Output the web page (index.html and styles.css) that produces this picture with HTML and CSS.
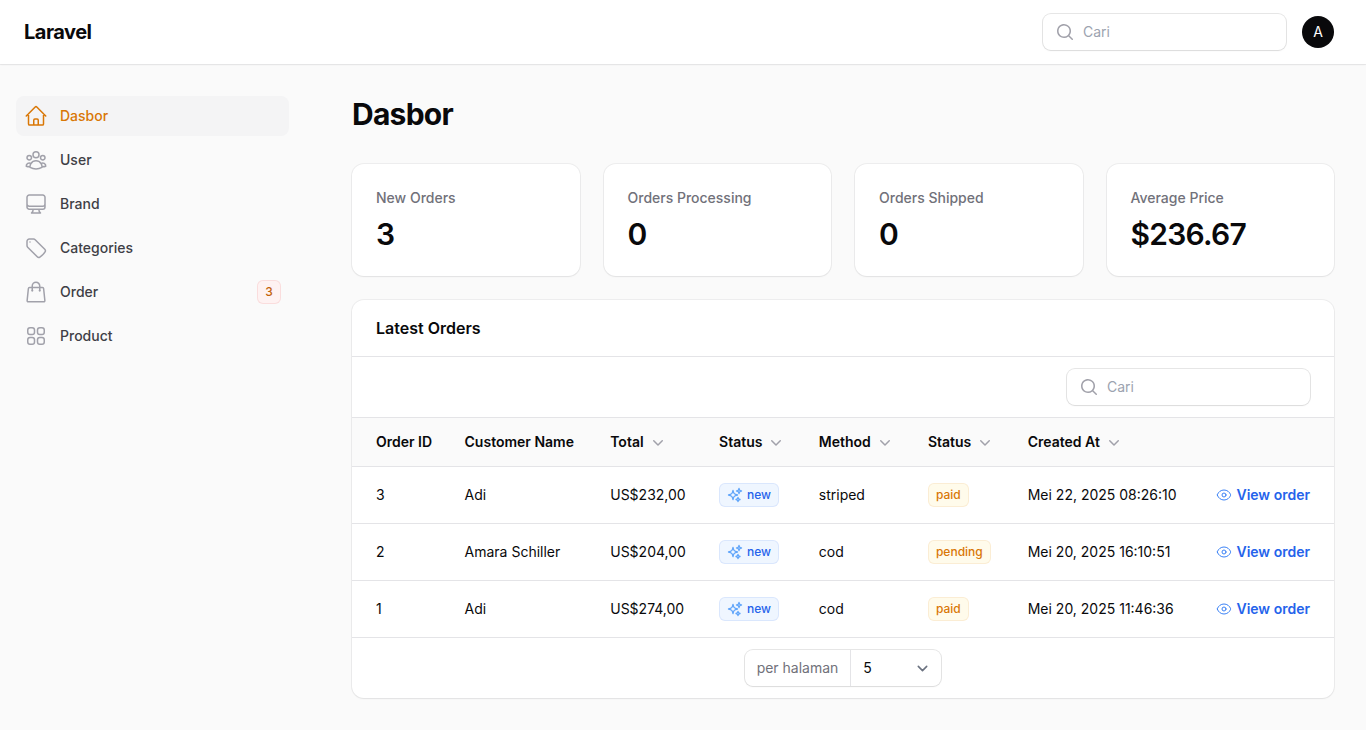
FILE: index.html
```html
<!DOCTYPE html>
<html lang="id">
<head>
    <meta charset="UTF-8">
    <meta name="viewport" content="width=device-width, initial-scale=1.0">
    <title>Dasbor - Laravel</title>
    <link rel="stylesheet" href="styles.css">
</head>
<body>
    <!-- Shared icons -->
    <svg class="sprite" aria-hidden="true">
        <symbol id="search" viewBox="0 0 20 20">
            <path fill="currentColor" fill-rule="evenodd" d="M9 3.5a5.5 5.5 0 1 0 0 11 5.5 5.5 0 0 0 0-11ZM2 9a7 7 0 1 1 12.452 4.391l3.328 3.329a.75.75 0 1 1-1.06 1.06l-3.329-3.328A7 7 0 0 1 2 9Z" clip-rule="evenodd"/>
        </symbol>
        <symbol id="chevron" viewBox="0 0 20 20">
            <path fill="currentColor" fill-rule="evenodd" d="M5.22 8.22a.75.75 0 0 1 1.06 0L10 11.94l3.72-3.72a.75.75 0 1 1 1.06 1.06l-4.25 4.25a.75.75 0 0 1-1.06 0L5.22 9.28a.75.75 0 0 1 0-1.06Z" clip-rule="evenodd"/>
        </symbol>
        <symbol id="sparkles" viewBox="0 0 24 24">
            <path d="M9.813 15.904 9 18.75l-.813-2.846a4.5 4.5 0 0 0-3.09-3.09L2.25 12l2.846-.813a4.5 4.5 0 0 0 3.09-3.09L9 5.25l.813 2.846a4.5 4.5 0 0 0 3.09 3.09L15.75 12l-2.846.813a4.5 4.5 0 0 0-3.09 3.09ZM18.259 8.715 18 9.75l-.259-1.035a3.375 3.375 0 0 0-2.455-2.456L14.25 6l1.036-.259a3.375 3.375 0 0 0 2.455-2.456L18 2.25l.259 1.035a3.375 3.375 0 0 0 2.456 2.456L21.75 6l-1.035.259a3.375 3.375 0 0 0-2.456 2.456ZM16.894 20.567 16.5 21.75l-.394-1.183a2.25 2.25 0 0 0-1.423-1.423L13.5 18.75l1.183-.394a2.25 2.25 0 0 0 1.423-1.423l.394-1.183.394 1.183a2.25 2.25 0 0 0 1.423 1.423l1.183.394-1.183.394a2.25 2.25 0 0 0-1.423 1.423Z"/>
        </symbol>
        <symbol id="eye" viewBox="0 0 24 24">
            <path d="M2.036 12.322a1.012 1.012 0 0 1 0-.639C3.423 7.51 7.36 4.5 12 4.5c4.638 0 8.573 3.007 9.963 7.178.07.207.07.431 0 .639C20.577 16.49 16.64 19.5 12 19.5c-4.638 0-8.573-3.007-9.963-7.178Z"/>
            <path d="M15 12a3 3 0 1 1-6 0 3 3 0 0 1 6 0Z"/>
        </symbol>
    </svg>

    <header class="topbar">
        <a class="logo" href="#">Laravel</a>
        <div class="topbar-end">
            <label class="search">
                <svg class="icon-md"><use href="#search"/></svg>
                <input type="search" placeholder="Cari" aria-label="Cari">
            </label>
            <button class="avatar" type="button">A</button>
        </div>
    </header>

    <div class="layout">
        <aside class="sidebar">
            <nav class="nav">
                <a class="nav-item active" href="#">
                    <svg class="icon-lg outline" viewBox="0 0 24 24"><path d="m2.25 12 8.954-8.955c.44-.439 1.152-.439 1.591 0L21.75 12M4.5 9.75v10.125c0 .621.504 1.125 1.125 1.125H9.75v-4.875c0-.621.504-1.125 1.125-1.125h2.25c.621 0 1.125.504 1.125 1.125V21h4.125c.621 0 1.125-.504 1.125-1.125V9.75M8.25 21h8.25"/></svg>
                    <span>Dasbor</span>
                </a>
                <a class="nav-item" href="#">
                    <svg class="icon-lg outline" viewBox="0 0 24 24"><path d="M18 18.72a9.094 9.094 0 0 0 3.741-.479 3 3 0 0 0-4.682-2.72m.94 3.198.001.031c0 .225-.012.447-.037.666A11.944 11.944 0 0 1 12 21c-2.17 0-4.207-.576-5.963-1.584A6.062 6.062 0 0 1 6 18.719m12 0a5.971 5.971 0 0 0-.941-3.197m0 0A5.995 5.995 0 0 0 12 12.75a5.995 5.995 0 0 0-5.058 2.772m0 0a3 3 0 0 0-4.681 2.72 8.986 8.986 0 0 0 3.74.477m.94-3.197a5.971 5.971 0 0 0-.94 3.197M15 6.75a3 3 0 1 1-6 0 3 3 0 0 1 6 0Zm6 3a2.25 2.25 0 1 1-4.5 0 2.25 2.25 0 0 1 4.5 0Zm-13.5 0a2.25 2.25 0 1 1-4.5 0 2.25 2.25 0 0 1 4.5 0Z"/></svg>
                    <span>User</span>
                </a>
                <a class="nav-item" href="#">
                    <svg class="icon-lg outline" viewBox="0 0 24 24"><path d="M9 17.25v1.007a3 3 0 0 1-.879 2.122L7.5 21h9l-.621-.621A3 3 0 0 1 15 18.257V17.25m6-12V15a2.25 2.25 0 0 1-2.25 2.25H5.25A2.25 2.25 0 0 1 3 15V5.25m18 0A2.25 2.25 0 0 0 18.75 3H5.25A2.25 2.25 0 0 0 3 5.25m18 0V12a2.25 2.25 0 0 1-2.25 2.25H5.25A2.25 2.25 0 0 1 3 12V5.25"/></svg>
                    <span>Brand</span>
                </a>
                <a class="nav-item" href="#">
                    <svg class="icon-lg outline" viewBox="0 0 24 24"><path d="M9.568 3H5.25A2.25 2.25 0 0 0 3 5.25v4.318c0 .597.237 1.17.659 1.591l9.581 9.581c.699.699 1.78.872 2.607.33a18.095 18.095 0 0 0 5.223-5.223c.542-.827.369-1.908-.33-2.607L11.16 3.66A2.25 2.25 0 0 0 9.568 3Z"/><path d="M6 6h.008v.008H6V6Z"/></svg>
                    <span>Categories</span>
                </a>
                <a class="nav-item" href="#">
                    <svg class="icon-lg outline" viewBox="0 0 24 24"><path d="M15.75 10.5V6a3.75 3.75 0 1 0-7.5 0v4.5m11.356-1.993 1.263 12c.07.665-.45 1.243-1.119 1.243H4.25a1.125 1.125 0 0 1-1.12-1.243l1.264-12A1.125 1.125 0 0 1 5.513 7.5h12.974c.576 0 1.059.435 1.119 1.007ZM8.625 10.5a.375.375 0 1 1-.75 0 .375.375 0 0 1 .75 0Zm7.5 0a.375.375 0 1 1-.75 0 .375.375 0 0 1 .75 0Z"/></svg>
                    <span>Order</span>
                    <span class="badge danger">3</span>
                </a>
                <a class="nav-item" href="#">
                    <svg class="icon-lg outline" viewBox="0 0 24 24"><path d="M3.75 6A2.25 2.25 0 0 1 6 3.75h2.25A2.25 2.25 0 0 1 10.5 6v2.25a2.25 2.25 0 0 1-2.25 2.25H6a2.25 2.25 0 0 1-2.25-2.25V6ZM3.75 15.75A2.25 2.25 0 0 1 6 13.5h2.25a2.25 2.25 0 0 1 2.25 2.25V18a2.25 2.25 0 0 1-2.25 2.25H6A2.25 2.25 0 0 1 3.75 18v-2.25ZM13.5 6a2.25 2.25 0 0 1 2.25-2.25H18A2.25 2.25 0 0 1 20.25 6v2.25A2.25 2.25 0 0 1 18 10.5h-2.25a2.25 2.25 0 0 1-2.25-2.25V6ZM13.5 15.75a2.25 2.25 0 0 1 2.25-2.25H18a2.25 2.25 0 0 1 2.25 2.25V18A2.25 2.25 0 0 1 18 20.25h-2.25A2.25 2.25 0 0 1 13.5 18v-2.25Z"/></svg>
                    <span>Product</span>
                </a>
            </nav>
        </aside>

        <main class="main">
            <h1>Dasbor</h1>

            <div class="widgets">
                <div class="stats">
                    <div class="card stat">
                        <span class="stat-label">New Orders</span>
                        <span class="stat-value">3</span>
                    </div>
                    <div class="card stat">
                        <span class="stat-label">Orders Processing</span>
                        <span class="stat-value">0</span>
                    </div>
                    <div class="card stat">
                        <span class="stat-label">Orders Shipped</span>
                        <span class="stat-value">0</span>
                    </div>
                    <div class="card stat">
                        <span class="stat-label">Average Price</span>
                        <span class="stat-value">$236.67</span>
                    </div>
                </div>

                <section class="card">
                    <h2>Latest Orders</h2>
                    <div class="toolbar">
                        <label class="search">
                            <svg class="icon-md"><use href="#search"/></svg>
                            <input type="search" placeholder="Cari" aria-label="Cari">
                        </label>
                    </div>
                    <table class="orders">
                        <thead>
                            <tr>
                                <th>Order ID</th>
                                <th>Customer Name</th>
                                <th><button class="sort" type="button">Total <svg class="icon-md"><use href="#chevron"/></svg></button></th>
                                <th><button class="sort" type="button">Status <svg class="icon-md"><use href="#chevron"/></svg></button></th>
                                <th><button class="sort" type="button">Method <svg class="icon-md"><use href="#chevron"/></svg></button></th>
                                <th><button class="sort" type="button">Status <svg class="icon-md"><use href="#chevron"/></svg></button></th>
                                <th><button class="sort" type="button">Created At <svg class="icon-md"><use href="#chevron"/></svg></button></th>
                                <th class="actions"></th>
                            </tr>
                        </thead>
                        <tbody>
                            <tr>
                                <td>3</td>
                                <td>Adi</td>
                                <td>US$232,00</td>
                                <td><span class="badge info"><svg class="icon-sm outline"><use href="#sparkles"/></svg>new</span></td>
                                <td>striped</td>
                                <td><span class="badge warning">paid</span></td>
                                <td>Mei 22, 2025 08:26:10</td>
                                <td class="actions"><a class="view" href="#"><svg class="icon-sm outline"><use href="#eye"/></svg>View order</a></td>
                            </tr>
                            <tr>
                                <td>2</td>
                                <td>Amara Schiller</td>
                                <td>US$204,00</td>
                                <td><span class="badge info"><svg class="icon-sm outline"><use href="#sparkles"/></svg>new</span></td>
                                <td>cod</td>
                                <td><span class="badge warning">pending</span></td>
                                <td>Mei 20, 2025 16:10:51</td>
                                <td class="actions"><a class="view" href="#"><svg class="icon-sm outline"><use href="#eye"/></svg>View order</a></td>
                            </tr>
                            <tr>
                                <td>1</td>
                                <td>Adi</td>
                                <td>US$274,00</td>
                                <td><span class="badge info"><svg class="icon-sm outline"><use href="#sparkles"/></svg>new</span></td>
                                <td>cod</td>
                                <td><span class="badge warning">paid</span></td>
                                <td>Mei 20, 2025 11:46:36</td>
                                <td class="actions"><a class="view" href="#"><svg class="icon-sm outline"><use href="#eye"/></svg>View order</a></td>
                            </tr>
                        </tbody>
                    </table>
                    <div class="pagination">
                        <div class="per-page">
                            <label for="per-page">per halaman</label>
                            <select id="per-page">
                                <option selected>5</option>
                                <option>10</option>
                                <option>25</option>
                                <option>50</option>
                            </select>
                        </div>
                    </div>
                </section>
            </div>
        </main>
    </div>
</body>
</html>
```
FILE: styles.css
```css
* {
    box-sizing: border-box;
}

body {
    margin: 0;
    min-height: 100vh;
    background-color: #fafafa;
    color: #09090b;
    font-family: Inter, sans-serif;
    font-size: 14px;
    line-height: 20px;
}

a {
    color: inherit;
    text-decoration: none;
}

button,
input,
select {
    font: inherit;
    color: inherit;
    border: none;
    background: none;
    padding: 0;
    margin: 0;
}

button {
    cursor: pointer;
}

svg {
    display: block;
    flex-shrink: 0;
}

.sprite {
    display: none;
}

.icon-sm {
    width: 16px;
    height: 16px;
}

.icon-md {
    width: 20px;
    height: 20px;
    color: #a1a1aa;
}

.icon-lg {
    width: 24px;
    height: 24px;
}

.outline {
    fill: none;
    stroke: currentColor;
    stroke-width: 1.5;
    stroke-linecap: round;
    stroke-linejoin: round;
}

/* Topbar */
.topbar {
    display: flex;
    align-items: center;
    justify-content: space-between;
    height: 64px;
    padding: 0 32px 0 24px;
    background-color: #fff;
    box-shadow: 0 0 0 1px rgba(9, 9, 11, 0.05), 0 1px 2px rgba(0, 0, 0, 0.05);
}

.logo {
    font-size: 20px;
    font-weight: 700;
    letter-spacing: -0.025em;
}

.topbar-end {
    display: flex;
    align-items: center;
    gap: 16px;
}

.search {
    display: flex;
    align-items: center;
    gap: 8px;
    width: 243px;
    height: 36px;
    padding: 0 12px;
    border-radius: 8px;
    background-color: #fff;
    box-shadow: 0 0 0 1px rgba(9, 9, 11, 0.1), 0 1px 2px rgba(0, 0, 0, 0.05);
}

.search input {
    flex: 1;
    min-width: 0;
    outline: none;
}

.search input::placeholder {
    color: #9ca3af;
}

.avatar {
    width: 32px;
    height: 32px;
    border-radius: 50%;
    background-color: #09090b;
    color: #fff;
}

/* Sidebar */
.layout {
    display: flex;
}

.sidebar {
    flex: 0 0 320px;
    padding: 32px 31px 32px 16px;
}

.nav {
    display: flex;
    flex-direction: column;
    gap: 4px;
}

.nav-item {
    display: flex;
    align-items: center;
    gap: 12px;
    padding: 8px;
    border-radius: 8px;
    color: #3f3f46;
    font-weight: 500;
}

.nav-item svg {
    color: #a1a1aa;
}

.nav-item.active {
    background-color: #f4f4f5;
}

.nav-item.active,
.nav-item.active svg {
    color: #d97706;
}

.nav-item .badge {
    margin-left: auto;
}

.badge {
    display: inline-flex;
    align-items: center;
    justify-content: center;
    gap: 4px;
    min-width: 24px;
    padding: 4px 8px;
    border-radius: 6px;
    font-size: 12px;
    font-weight: 500;
    line-height: 16px;
    vertical-align: top;
}

.badge.danger {
    background-color: #fef2f2;
    color: #c2630a;
    box-shadow: inset 0 0 0 1px rgba(220, 38, 38, 0.1);
}

.badge.info {
    background-color: #eff6ff;
    color: #2563eb;
    box-shadow: inset 0 0 0 1px rgba(37, 99, 235, 0.1);
}

.badge.info svg {
    color: #60a5fa;
    stroke-width: 2;
}

.badge.warning {
    background-color: #fffbeb;
    color: #d97706;
    box-shadow: inset 0 0 0 1px rgba(217, 119, 6, 0.1);
}

/* Main */
.main {
    flex: 1;
    min-width: 0;
    padding: 32px;
}

h1 {
    margin: 0 0 32px;
    font-size: 30px;
    font-weight: 700;
    line-height: 36px;
    letter-spacing: -0.025em;
}

.widgets {
    display: grid;
    gap: 24px;
}

.card {
    border-radius: 12px;
    background-color: #fff;
    box-shadow: 0 0 0 1px rgba(9, 9, 11, 0.05), 0 1px 2px rgba(0, 0, 0, 0.05);
}

.stats {
    display: grid;
    grid-template-columns: repeat(4, 1fr);
    gap: 24px;
}

.stat {
    display: flex;
    flex-direction: column;
    gap: 8px;
    padding: 24px;
}

.stat-label {
    color: #71717a;
    font-weight: 500;
}

.stat-value {
    font-size: 30px;
    font-weight: 600;
    line-height: 36px;
    letter-spacing: -0.025em;
}

h2 {
    margin: 0;
    padding: 16px 24px;
    font-size: 16px;
    font-weight: 600;
    line-height: 24px;
}

.toolbar {
    display: flex;
    justify-content: flex-end;
    padding: 12px 24px;
    border-top: 1px solid #e4e4e7;
}

/* Orders table */
.orders {
    width: 100%;
    border-collapse: separate;
    border-spacing: 0;
}

.orders th,
.orders td {
    padding: 16px 12px;
    border-top: 1px solid #e4e4e7;
    line-height: 24px;
    text-align: left;
    white-space: nowrap;
}

.orders th {
    padding: 14px 12px;
    background-color: #fafafa;
    font-weight: 600;
    line-height: 20px;
}

.orders th:first-child,
.orders td:first-child {
    padding-left: 24px;
}

.orders th:last-child,
.orders td:last-child {
    padding-right: 24px;
}

.orders .actions {
    width: 4px;
}

.sort {
    display: flex;
    align-items: center;
    gap: 4px;
}

.view {
    display: flex;
    align-items: center;
    justify-content: flex-end;
    gap: 4px;
    color: #2563eb;
    font-weight: 600;
}

.view svg {
    color: #3b82f6;
}

.pagination {
    display: flex;
    justify-content: center;
    padding: 12px 24px;
    border-top: 1px solid #e4e4e7;
}

.per-page {
    display: flex;
    align-items: center;
    height: 36px;
    border-radius: 8px;
    box-shadow: 0 0 0 1px rgba(9, 9, 11, 0.1), 0 1px 2px rgba(0, 0, 0, 0.05);
}

.per-page label {
    padding: 8px 12px;
    color: #71717a;
}

.per-page select {
    appearance: none;
    width: 91px;
    height: 36px;
    padding: 0 32px 0 12px;
    border-left: 1px solid #e4e4e7;
    background: url("data:image/svg+xml,%3Csvg xmlns='http://www.w3.org/2000/svg' fill='none' viewBox='0 0 20 20'%3E%3Cpath stroke='%236b7280' stroke-linecap='round' stroke-linejoin='round' stroke-width='1.5' d='m6 8 4 4 4-4'/%3E%3C/svg%3E") no-repeat right 8px center / 21px;
}
```
